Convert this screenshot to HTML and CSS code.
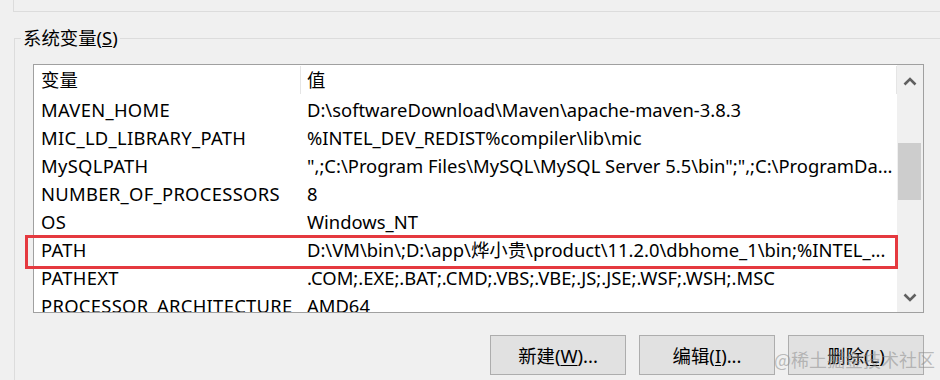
FILE: index.html
```html
<!DOCTYPE html>
<html lang="zh-CN">
<head>
<meta charset="utf-8">
<title>系统变量</title>
<link rel="stylesheet" href="styles.css">
</head>
<body>
<div class="prev-group"></div>
<div class="group">
  <div class="legend">系统变量(<u>S</u>)</div>
  <div class="listbox">
    <div class="list-main">
      <div class="row header">
        <div class="cell name">变量</div>
        <div class="cell value">值</div>
      </div>
      <div class="row"><div class="cell name">MAVEN_HOME</div><div class="cell value">D:\softwareDownload\Maven\apache-maven-3.8.3</div></div>
      <div class="row"><div class="cell name">MIC_LD_LIBRARY_PATH</div><div class="cell value">%INTEL_DEV_REDIST%compiler\lib\mic</div></div>
      <div class="row"><div class="cell name">MySQLPATH</div><div class="cell value">",;C:\Program Files\MySQL\MySQL Server 5.5\bin";",;C:\ProgramDa...</div></div>
      <div class="row"><div class="cell name">NUMBER_OF_PROCESSORS</div><div class="cell value">8</div></div>
      <div class="row"><div class="cell name">OS</div><div class="cell value">Windows_NT</div></div>
      <div class="row"><div class="cell name">PATH</div><div class="cell value">D:\VM\bin\;D:\app\烨小贵\product\11.2.0\dbhome_1\bin;%INTEL_...</div></div>
      <div class="row"><div class="cell name">PATHEXT</div><div class="cell value">.COM;.EXE;.BAT;.CMD;.VBS;.VBE;.JS;.JSE;.WSF;.WSH;.MSC</div></div>
      <div class="row"><div class="cell name">PROCESSOR_ARCHITECTURE</div><div class="cell value">AMD64</div></div>
    </div>
    <div class="scrollbar">
      <div class="sb-btn sb-up">
        <svg width="14" height="9" viewBox="0 0 14 9"><polyline points="1.5,7.5 7,2 12.5,7.5" fill="none" stroke="#606060" stroke-width="2.6"/></svg>
      </div>
      <div class="sb-track"><div class="sb-thumb"></div></div>
      <div class="sb-btn sb-down">
        <svg width="14" height="9" viewBox="0 0 14 9"><polyline points="1.5,1.5 7,7 12.5,1.5" fill="none" stroke="#606060" stroke-width="2.6"/></svg>
      </div>
    </div>
    <div class="highlight"></div>
  </div>
  <div class="buttons">
    <button class="btn">新建(<u>W</u>)...</button>
    <button class="btn">编辑(<u>I</u>)...</button>
    <button class="btn">删除(<u>L</u>)</button>
  </div>
</div>
<div class="watermark">@稀土掘金技术社区</div>
</body>
</html>
```
FILE: styles.css
```css
html, body {
  margin: 0;
  padding: 0;
}
body {
  width: 940px;
  height: 380px;
  overflow: hidden;
  background: #f0f0f0;
  font-family: "Noto Sans", "Noto Sans CJK SC", sans-serif;
  font-size: 18.4px;
  color: #000;
  position: relative;
}
.prev-group {
  height: 11px;
  margin-left: 13px;
  border-left: 1px solid #dcdcdc;
  border-bottom: 1px solid #dcdcdc;
}
.group {
  margin-top: 26px;
  margin-left: 14px;
  border-top: 1px solid #dcdcdc;
  border-left: 1px solid #dcdcdc;
  height: 400px;
}
.legend {
  display: block;
  width: fit-content;
  margin-top: -13px;
  margin-left: 6px;
  padding: 0 2px;
  background: #f0f0f0;
  line-height: 24px;
  height: 24px;
}
.listbox {
  position: relative;
  margin-top: 14px;
  margin-left: 18px;
  width: 889px;
  height: 247px;
  border: 1px solid #a0a0a0;
  background: #fff;
  display: flex;
}
.list-main {
  flex: 1;
  overflow: hidden;
}
.row {
  display: flex;
  height: 28px;
  line-height: 28px;
  white-space: nowrap;
}
.row.header {
  height: 31px;
}
.cell.name {
  width: 259px;
  padding-left: 7px;
  flex: none;
  letter-spacing: 0.3px;
}
.cell.value {
  padding-left: 7px;
  flex: 1;
}
.header .cell {
  border-right: 1px solid #e5e5e5;
  margin: 1px 0 2px;
  line-height: 28px;
  letter-spacing: 0;
}
.header .cell.value {
  padding-left: 6px;
}
.scrollbar {
  width: 26px;
  flex: none;
  background: #f0f0f0;
  display: flex;
  flex-direction: column;
}
.sb-btn {
  height: 32px;
  display: flex;
  align-items: center;
  justify-content: center;
}
.sb-down {
  padding-top: 4px;
  height: 30px;
}
.sb-track {
  flex: 1;
}
.sb-thumb {
  margin: 46px 2px 0 1px;
  height: 57px;
  background: #cdcdcd;
}
.highlight {
  position: absolute;
  left: -9px;
  top: 170px;
  width: 867px;
  height: 28px;
  border: 3px solid #e5393f;
  pointer-events: none;
}
.buttons {
  display: flex;
  gap: 13px;
  margin-top: 22px;
  margin-left: 475px;
}
.btn {
  width: 136px;
  height: 40px;
  background: #e1e1e1;
  border: 1px solid #adadad;
  border-radius: 0;
  font-family: "Noto Sans", "Noto Sans CJK SC", sans-serif;
  font-size: 18.4px;
  color: #000;
  padding: 0;
}
.btn u {
  text-underline-offset: 2px;
}
.watermark {
  position: absolute;
  right: 5px;
  bottom: 8px;
  font-family: "Noto Sans CJK SC", sans-serif;
  font-size: 18px;
  color: rgba(140, 140, 140, 0.55);
}
```
